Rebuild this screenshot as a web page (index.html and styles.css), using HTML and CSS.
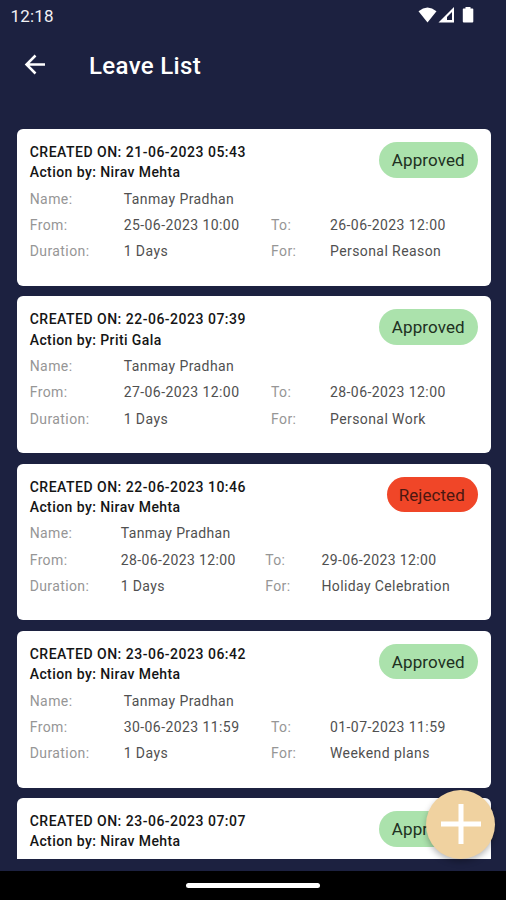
FILE: index.html
```html
<!DOCTYPE html>
<html lang="en">
<head>
<meta charset="utf-8">
<title>Leave List</title>
<link rel="stylesheet" href="styles.css">
</head>
<body>
<div class="screen">
  <div class="status-bar">
    <span class="clock">12:18</span>
    <svg class="status-icons" width="56" height="18" viewBox="0 0 56 18">
      <path d="M0.5 4.2Q9.500-3 18.500 4.200L9.500 15.500Z" fill="#fff"/>
      <path d="M36 0V15.500H20.500Z" fill="#fff"/>
      <path d="M34 5V13H29V10Z" fill="#1c2140"/>
      <path d="M45.500 1.500h2V0h5v1.500h2q.8 0 .8.800V14.500q0 1-1 1h-8.500q-1 0-1-1V2.300q0-.8.700-.8Z" fill="#fff"/>
    </svg>
  </div>
  <header class="app-bar">
    <svg class="back" width="22" height="22" viewBox="0 0 22 22" fill="none" stroke="#fff" stroke-width="2.500"><path d="M21 10.500H2.500M11.500 1.500L2.500 10.500L11.500 19.500"/></svg>
    <h1>Leave List</h1>
  </header>
  <main class="list">
    <article class="card">
      <div class="card-head"><div><p>CREATED ON: 21-06-2023 05:43</p><p class="actor">Action by: Nirav Mehta</p></div><span class="badge approved">Approved</span></div>
      <dl><dt>Name:</dt><dd class="wide">Tanmay Pradhan</dd><dt>From:</dt><dd>25-06-2023 10:00</dd><dt>To:</dt><dd>26-06-2023 12:00</dd><dt>Duration:</dt><dd>1 Days</dd><dt>For:</dt><dd>Personal Reason</dd></dl>
    </article>
    <article class="card">
      <div class="card-head"><div><p>CREATED ON: 22-06-2023 07:39</p><p class="actor">Action by: Priti Gala</p></div><span class="badge approved">Approved</span></div>
      <dl><dt>Name:</dt><dd class="wide">Tanmay Pradhan</dd><dt>From:</dt><dd>27-06-2023 12:00</dd><dt>To:</dt><dd>28-06-2023 12:00</dd><dt>Duration:</dt><dd>1 Days</dd><dt>For:</dt><dd>Personal Work</dd></dl>
    </article>
    <article class="card">
      <div class="card-head"><div><p>CREATED ON: 22-06-2023 10:46</p><p class="actor">Action by: Nirav Mehta</p></div><span class="badge rejected">Rejected</span></div>
      <dl class="compact"><dt>Name:</dt><dd class="wide">Tanmay Pradhan</dd><dt>From:</dt><dd>28-06-2023 12:00</dd><dt>To:</dt><dd>29-06-2023 12:00</dd><dt>Duration:</dt><dd>1 Days</dd><dt>For:</dt><dd>Holiday Celebration</dd></dl>
    </article>
    <article class="card">
      <div class="card-head"><div><p>CREATED ON: 23-06-2023 06:42</p><p class="actor">Action by: Nirav Mehta</p></div><span class="badge approved">Approved</span></div>
      <dl><dt>Name:</dt><dd class="wide">Tanmay Pradhan</dd><dt>From:</dt><dd>30-06-2023 11:59</dd><dt>To:</dt><dd>01-07-2023 11:59</dd><dt>Duration:</dt><dd>1 Days</dd><dt>For:</dt><dd>Weekend plans</dd></dl>
    </article>
    <article class="card">
      <div class="card-head"><div><p>CREATED ON: 23-06-2023 07:07</p><p class="actor">Action by: Nirav Mehta</p></div><span class="badge approved">Approved</span></div>
    </article>
  </main>
  <footer class="nav-bar"><span class="handle"></span></footer>
  <button class="fab" aria-label="Add leave"><svg width="40" height="40" viewBox="0 0 40 40" stroke="#fff" stroke-width="5"><path d="M20 0V40M0 20H40"/></svg></button>
</div>
</body>
</html>
```
FILE: styles.css
```css
* { box-sizing: border-box; }
body, h1, p, dl, dd { margin: 0; }
body { font-family: Roboto, "Liberation Sans", sans-serif; }
.screen {
  position: relative;
  display: flex;
  flex-direction: column;
  width: 506px;
  height: 900px;
  overflow: hidden;
  background: #1c2140;
}
.status-bar {
  display: flex;
  justify-content: space-between;
  flex: none;
  height: 32px;
  padding: 7px 32px 0 10.500px;
}
.clock { font-size: 17px; line-height: 18px; letter-spacing: .2px; color: #f2f2f4; }
.status-icons { width: 56px; height: 18px; }
.app-bar {
  display: flex;
  align-items: center;
  flex: none;
  height: 97px;
  padding: 0 24px 31px;
  gap: 43px;
}
.app-bar h1 { padding-top: 1px; font-size: 24px; font-weight: 500; line-height: 30px; letter-spacing: .35px; color: #fff; }
.back { flex: none; }
.list {
  display: flex;
  flex-direction: column;
  flex: none;
  height: 730px;
  gap: 10.600px;
  padding: 0 15.500px 0 16.700px;
  overflow: hidden;
}
.card {
  flex: none;
  height: 156.700px;
  padding: 13px 13px 0;
  border-radius: 6px;
  background: #fff;
}
.card-head {
  display: flex;
  justify-content: space-between;
  height: 43.900px;
  font-size: 14px;
  font-weight: 500;
  line-height: 20.300px;
  letter-spacing: .5px;
  color: #151515;
}
.actor { letter-spacing: .42px; }
.badge {
  height: 35.500px;
  padding: 0 12.700px 0 12.500px;
  border-radius: 18px;
  font-size: 17px;
  font-weight: 400;
  line-height: 36.500px;
  letter-spacing: .12px;
}
.approved { background: #abe2ac; color: #20301f; }
.rejected { padding-left: 12px; background: #f04628; color: #4b1710; letter-spacing: .05px; }
dl {
  display: grid;
  grid-template-columns: 94px 147.300px 59px 1fr;
  grid-auto-rows: 26.300px;
  font-size: 14px;
  line-height: 26px;
  letter-spacing: .42px;
  white-space: nowrap;
}
dl.compact { grid-template-columns: 91px 144.500px 56.300px 1fr; letter-spacing: .38px; }
dt { color: #969696; }
dd { color: #505050; }
.wide { grid-column: 2 / -1; }
.nav-bar {
  display: flex;
  justify-content: center;
  flex: none;
  height: 29px;
  margin-top: 12px;
  padding-top: 12px;
  background: #000;
}
.handle { width: 134px; height: 5px; border-radius: 2.500px; background: #fff; }
.fab {
  position: absolute;
  left: 426px;
  top: 789.500px;
  display: grid;
  place-items: center;
  width: 69px;
  height: 69px;
  padding: 0;
  border: 0;
  border-radius: 50%;
  background: #f0d2a0;
  box-shadow: 0 3px 6px rgb(0 0 0 / 28%);
}
```
